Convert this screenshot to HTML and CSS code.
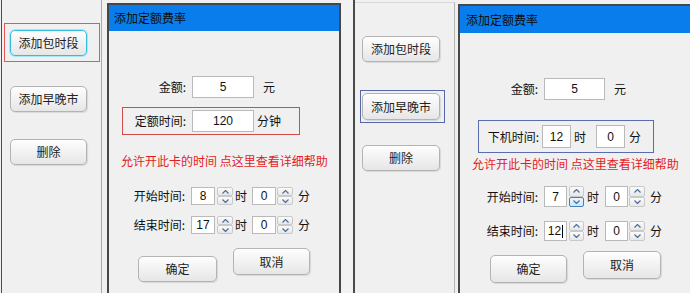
FILE: index.html
```html
<!DOCTYPE html>
<html lang="zh-CN">
<head>
<meta charset="utf-8">
<title>添加定额费率</title>
<link rel="stylesheet" href="styles.css">
</head>
<body>
<div class="screen">
  <div class="panel panel-a">
    <div class="sidebar sidebar-a">
      <div class="focus-red"><div class="btn btn-focus btn-a">添加包时段</div></div>
      <div class="btn btn-a a-2">添加早晚市</div>
      <div class="btn btn-a a-3">删除</div>
    </div>
    <div class="dialog dialog-a">
      <div class="titlebar tb-a">添加定额费率</div>
      <div class="body">
        <div class="row a-amount">
          <span class="label la">金额:</span>
          <span class="field fa">5</span>
          <span class="unit ua">元</span>
        </div>
        <div class="box-red row">
          <span class="label la">定额时间:</span>
          <span class="field fa">120</span>
          <span class="unit ub">分钟</span>
        </div>
        <div class="help a-help">允许开此卡的时间 点这里查看详细帮助</div>
        <div class="row a-time a-start">
          <span class="label la2">开始时间:</span>
          <span class="field ft-a">8</span>
          <span class="spin sa"><span class="half"><svg width="7" height="4" viewBox="0 0 7 4"><polyline points="0.5,3.5 3.5,0.5 6.5,3.5"/></svg></span><span class="half"><svg width="7" height="4" viewBox="0 0 7 4"><polyline points="0.5,0.5 3.5,3.5 6.5,0.5"/></svg></span></span>
          <span class="unit uh">时</span>
          <span class="field ft-a fm-a">0</span>
          <span class="spin sa2"><span class="half"><svg width="7" height="4" viewBox="0 0 7 4"><polyline points="0.5,3.5 3.5,0.5 6.5,3.5"/></svg></span><span class="half"><svg width="7" height="4" viewBox="0 0 7 4"><polyline points="0.5,0.5 3.5,3.5 6.5,0.5"/></svg></span></span>
          <span class="unit um">分</span>
        </div>
        <div class="row a-time a-end">
          <span class="label la2">结束时间:</span>
          <span class="field ft-a">17</span>
          <span class="spin sa"><span class="half"><svg width="7" height="4" viewBox="0 0 7 4"><polyline points="0.5,3.5 3.5,0.5 6.5,3.5"/></svg></span><span class="half"><svg width="7" height="4" viewBox="0 0 7 4"><polyline points="0.5,0.5 3.5,3.5 6.5,0.5"/></svg></span></span>
          <span class="unit uh">时</span>
          <span class="field ft-a fm-a">0</span>
          <span class="spin sa2"><span class="half"><svg width="7" height="4" viewBox="0 0 7 4"><polyline points="0.5,3.5 3.5,0.5 6.5,3.5"/></svg></span><span class="half"><svg width="7" height="4" viewBox="0 0 7 4"><polyline points="0.5,0.5 3.5,3.5 6.5,0.5"/></svg></span></span>
          <span class="unit um">分</span>
        </div>
        <div class="actions a-actions">
          <div class="btn ok-a">确定</div>
          <div class="btn cancel-a">取消</div>
        </div>
      </div>
    </div>
  </div>

  <div class="mid"></div>

  <div class="panel panel-b">
    <div class="sidebar sidebar-b">
      <div class="btn btn-b b-1">添加包时段</div>
      <div class="focus-blue"><div class="btn btn-b b-2">添加早晚市</div></div>
      <div class="btn btn-b b-3">删除</div>
    </div>
    <div class="dialog dialog-b">
      <div class="titlebar tb-b">添加定额费率</div>
      <div class="body">
        <div class="row b-amount">
          <span class="label lb">金额:</span>
          <span class="field fb">5</span>
          <span class="unit ua">元</span>
        </div>
        <div class="box-blue row">
          <span class="label lb3">下机时间:</span>
          <span class="field fbx">12</span>
          <span class="unit uh-b">时</span>
          <span class="field fbx fbx2">0</span>
          <span class="unit um-b">分</span>
        </div>
        <div class="help b-help">允许开此卡的时间 点这里查看详细帮助</div>
        <div class="row b-time b-start">
          <span class="label lb">开始时间:</span>
          <span class="field ft-b">7</span>
          <span class="spin sb"><span class="half"><svg width="7" height="4" viewBox="0 0 7 4"><polyline points="0.5,3.5 3.5,0.5 6.5,3.5"/></svg></span><span class="half hot"><svg width="7" height="4" viewBox="0 0 7 4"><polyline points="0.5,0.5 3.5,3.5 6.5,0.5"/></svg></span></span>
          <span class="unit uh-c">时</span>
          <span class="field ft-b fm-b">0</span>
          <span class="spin sb2"><span class="half"><svg width="7" height="4" viewBox="0 0 7 4"><polyline points="0.5,3.5 3.5,0.5 6.5,3.5"/></svg></span><span class="half"><svg width="7" height="4" viewBox="0 0 7 4"><polyline points="0.5,0.5 3.5,3.5 6.5,0.5"/></svg></span></span>
          <span class="unit um-c">分</span>
        </div>
        <div class="row b-time b-end">
          <span class="label lb">结束时间:</span>
          <span class="field ft-b">12<span class="caret"></span></span>
          <span class="spin sb"><span class="half"><svg width="7" height="4" viewBox="0 0 7 4"><polyline points="0.5,3.5 3.5,0.5 6.5,3.5"/></svg></span><span class="half"><svg width="7" height="4" viewBox="0 0 7 4"><polyline points="0.5,0.5 3.5,3.5 6.5,0.5"/></svg></span></span>
          <span class="unit uh-c">时</span>
          <span class="field ft-b fm-b">0</span>
          <span class="spin sb2"><span class="half"><svg width="7" height="4" viewBox="0 0 7 4"><polyline points="0.5,3.5 3.5,0.5 6.5,3.5"/></svg></span><span class="half"><svg width="7" height="4" viewBox="0 0 7 4"><polyline points="0.5,0.5 3.5,3.5 6.5,0.5"/></svg></span></span>
          <span class="unit um-c">分</span>
        </div>
        <div class="actions b-actions">
          <div class="btn ok-b">确定</div>
          <div class="btn cancel-b">取消</div>
        </div>
      </div>
    </div>
  </div>
</div>
</body>
</html>
```

FILE: styles.css
```css
* { box-sizing: border-box; }

html, body {
  margin: 0;
  padding: 0;
}

body {
  width: 690px;
  height: 293px;
  overflow: hidden;
  background: #f0f0f0;
  font-family: "Noto Sans CJK SC", "Noto Sans", sans-serif;
  font-size: 12px;
  line-height: 14px;
  color: #111;
}

.screen {
  display: flex;
  height: 293px;
  overflow: hidden;
}

.panel {
  display: flex;
  height: 293px;
  flex: none;
}

.panel-a {
  width: 341px;
  margin-left: 1px;
  border-left: 1px solid #4e4e4e;
}

.mid {
  width: 11px;
  flex: none;
  background: #f2f2f2;
}

.panel-b {
  width: 338px;
  border-left: 2px solid #4a4a4a;
  overflow: hidden;
}

.sidebar {
  flex: none;
  width: 100px;
  display: flex;
  flex-direction: column;
  align-items: flex-start;
  border-right: 1px solid #a9a9a9;
}

.sidebar-b {
  width: 100px;
  border-right: 1px solid #b4b4b4;
  border-top: 1px solid #d8d8d8;
  margin-top: 2px;
}

/* buttons */
.btn {
  flex: none;
  display: flex;
  align-items: center;
  justify-content: center;
  border: 1px solid #b3b3b3;
  border-radius: 5px;
  background: linear-gradient(#fefefe, #f3f3f3 45%, #e6e6e6);
  box-shadow: 1px 1px 1px rgba(0, 0, 0, 0.10);
  color: #222;
  font-size: 12px;
  line-height: 14px;
  white-space: nowrap;
}

.btn-a {
  width: 77px;
  height: 26px;
}

.btn-focus {
  border: 1px solid #2fbfe0;
  box-shadow: 0 0 0 1px #a6e8f6;
}

.focus-red {
  margin-top: 23px;
  margin-left: 2px;
  width: 96px;
  height: 39px;
  border: 1px solid #e05a5a;
  padding: 6px 0 0 5px;
}

.a-2 { margin-top: 24px; margin-left: 8px; }
.a-3 { margin-top: 27px; margin-left: 8px; }

.btn-b {
  width: 78px;
  height: 26px;
}

.b-1 { margin-top: 33px; margin-left: 7px; }

.focus-blue {
  margin-top: 28px;
  margin-left: 5px;
  width: 85px;
  height: 33px;
  border: 1px solid #5667ab;
  padding: 2px 0 0 1px;
}

.b-2 { height: 27px; }
.b-3 { margin-top: 22px; margin-left: 7px; }

/* dialogs */
.dialog {
  flex: none;
  display: flex;
  flex-direction: column;
  border: 2px solid #474747;
  border-bottom: none;
  background: #f0f0f0;
}

.dialog-a {
  width: 234px;
  margin-left: 5px;
  margin-top: 3px;
}

.dialog-b {
  width: 250px;
  margin-left: 3px;
  margin-top: 4px;
}

.titlebar {
  flex: none;
  background: #0a7ded;
  color: #0c0c0c;
  display: flex;
  align-items: center;
  font-size: 12px;
}

.tb-a { height: 26px; padding-left: 5px; }
.tb-b { height: 27px; padding-left: 6px; }

.body {
  display: flex;
  flex-direction: column;
  align-items: flex-start;
}

.row {
  display: flex;
  align-items: center;
  flex: none;
}

.label {
  flex: none;
  text-align: right;
  white-space: nowrap;
}

.la { width: 69px; padding-right: 6px; }
.la2 { width: 68px; padding-right: 6px; }
.lb { width: 65px; padding-right: 6px; }
.lb3 { width: 63px; padding-right: 3px; }

.field {
  flex: none;
  display: flex;
  align-items: center;
  justify-content: center;
  background: #fff;
  border: 1px solid #b9b9b9;
  font-family: "Liberation Sans", Arial, sans-serif;
  font-size: 12px;
  color: #111;
}

.unit {
  flex: none;
  white-space: nowrap;
}

/* left dialog */
.a-amount { margin-top: 45px; margin-left: 14px; }
.fa { width: 62px; height: 22px; }
.ua { margin-left: 9px; }
.ub { margin-left: 3px; }

.box-red {
  margin-top: 9px;
  margin-left: 13px;
  width: 178px;
  height: 28px;
  border: 1px solid #d24c4c;
}

.help {
  color: #e21d1d;
  line-height: 16px;
  white-space: nowrap;
  flex: none;
}

.a-help { margin-top: 18px; margin-left: 12px; }

.a-time { margin-left: 14px; height: 18px; }
.a-start { margin-top: 18px; }
.a-end { margin-top: 11px; }

.ft-a { width: 24px; height: 18px; }
.fm-a { margin-left: 5px; }

.spin {
  flex: none;
  display: flex;
  flex-direction: column;
}

.half {
  flex: 1;
  display: flex;
  align-items: center;
  justify-content: center;
  border: 1px solid #c9c9c9;
  border-radius: 2px;
  background: linear-gradient(#fbfbfb, #e7e7e7);
}

.half svg {
  display: block;
  fill: none;
  stroke: #4b6d9c;
  stroke-width: 1.2;
}

.half.hot {
  border-color: #3a85c0;
  background: linear-gradient(#eaf5fd, #cfe6f8);
}

.sa { width: 16px; height: 18px; margin-left: 2px; }
.sa2 { width: 16px; height: 18px; margin-left: 1px; }
.uh { margin-left: 2px; }
.um { margin-left: 5px; }

.actions {
  display: flex;
  align-items: flex-start;
  flex: none;
}

.a-actions { margin-top: 14px; margin-left: 29px; }
.ok-a { width: 79px; height: 26px; margin-top: 8px; }
.cancel-a { width: 77px; height: 27px; margin-left: 16px; }

/* right dialog */
.b-amount { margin-top: 45px; margin-left: 19px; }
.fb { width: 61px; height: 22px; }

.box-blue {
  margin-top: 20px;
  margin-left: 18px;
  width: 176px;
  height: 33px;
  border: 1px solid #5a6cae;
}

.fbx { width: 29px; height: 23px; }
.uh-b { margin-left: 3px; }
.fbx2 { margin-left: 10px; }
.um-b { margin-left: 4px; }

.b-help { margin-top: 3px; margin-left: 12px; }

.b-time { margin-left: 19px; }
.b-start { margin-top: 14px; height: 21px; }
.b-end { margin-top: 14px; height: 20px; }

.ft-b { width: 23px; height: 100%; }
.fm-b { margin-left: 6px; }
.sb { width: 15px; height: 100%; margin-left: 2px; }
.sb2 { width: 16px; height: 100%; margin-left: 1px; }
.uh-c { margin-left: 3px; }
.um-c { margin-left: 5px; }

.caret {
  display: inline-block;
  width: 1px;
  height: 13px;
  background: #000;
  margin-left: 1px;
}

.b-actions { margin-top: 10px; margin-left: 30px; }
.ok-b { width: 77px; height: 28px; margin-top: 4px; }
.cancel-b { width: 78px; height: 28px; margin-left: 16px; }
```
